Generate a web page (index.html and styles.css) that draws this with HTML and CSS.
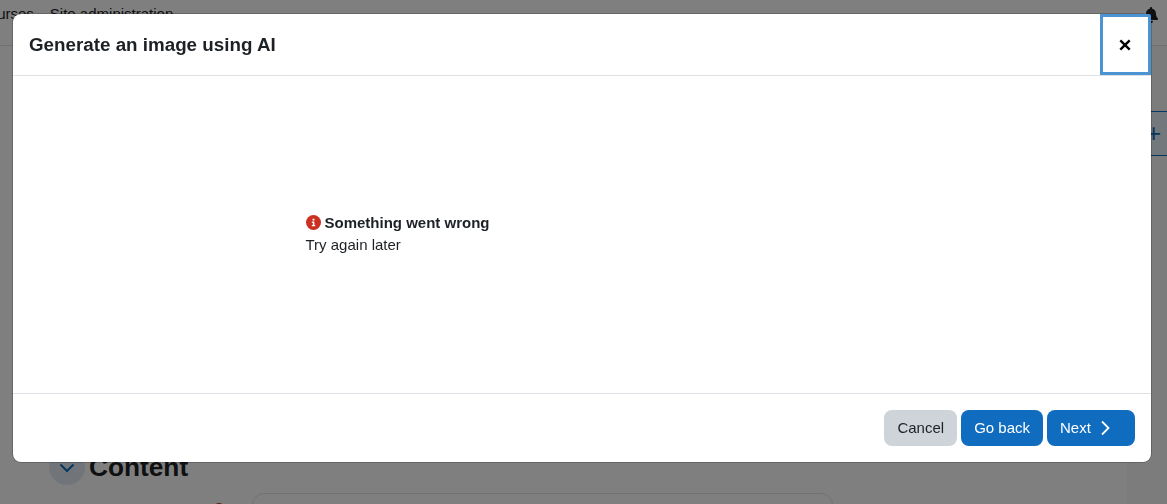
FILE: index.html
```html
<!DOCTYPE html>
<html lang="en">
<head>
<meta charset="utf-8">
<title>Generate an image using AI</title>
<link rel="stylesheet" href="styles.css">
</head>
<body>
<div class="page">
  <nav class="topnav">
    <span class="nav-links"><span>Courses</span><span>Site administration</span></span>
    <svg class="bell" viewBox="0 0 448 512" width="14" height="16"><path d="M224 0c-18 0-32 14-32 32v19C119 66 64 131 64 208v19c0 47-17 92-49 127l-7 8c-8 9-10 22-5 34s16 18 29 18h384c13 0 24-7 29-18s3-25-5-34l-7-8c-32-35-49-80-49-127v-19c0-77-55-142-128-157V32c0-18-14-32-32-32zm45 493c12-12 19-28 19-45H160c0 17 7 33 19 45s28 19 45 19 33-7 45-19z"/></svg>
  </nav>
  <div class="page-body">
    <main class="content">
      <div class="section-head">
        <span class="chevron-circle">
          <svg viewBox="0 0 16 16" width="16" height="16"><path d="M1.500 5.500L8 12l6.500-6.500" fill="none" stroke="#0f6cbf" stroke-width="2"/></svg>
        </span>
        <h2 class="section-title">Content</h2>
      </div>
      <div class="field-row">
        <span class="required-dot"></span>
        <div class="field-box"></div>
      </div>
    </main>
    <aside class="drawer">
      <span class="drawer-toggle">+</span>
    </aside>
  </div>
</div>
<div class="backdrop">
  <section class="modal">
    <header class="modal-header">
      <h1 class="modal-title">Generate an image using AI</h1>
      <button class="close" type="button" aria-label="Close">
        <svg viewBox="0 0 12 12" width="12" height="12"><path d="M1.300 1.300l9.400 9.400M10.700 1.300l-9.400 9.400" fill="none" stroke="#000" stroke-width="2.400"/></svg>
      </button>
    </header>
    <div class="modal-body">
      <div class="message">
        <div class="message-title">
          <svg class="err-icon" viewBox="0 0 16 16" width="15" height="15"><circle cx="8" cy="8" r="8" fill="#ca3120"/><path d="M7 4h2v1.800H7zM6.200 7h2.700v3.700h.9V12H6.200v-1.300h1.100V8.300H6.200z" fill="#fff"/></svg>
          <strong>Something went wrong</strong>
        </div>
        <div class="message-text">Try again later</div>
      </div>
    </div>
    <footer class="modal-footer">
      <button class="btn btn-secondary" type="button">Cancel</button>
      <button class="btn btn-primary" type="button">Go back</button>
      <button class="btn btn-primary btn-next" type="button">Next
        <svg viewBox="0 0 10 16" width="10" height="16"><path d="M2 1.500L8.500 8 2 14.500" fill="none" stroke="#fff" stroke-width="1.800"/></svg>
      </button>
    </footer>
  </section>
</div>
</body>
</html>
```
FILE: styles.css
```css
* { box-sizing: border-box; }
html, body { margin: 0; height: 100%; overflow: hidden; }
body {
  font-family: "Liberation Sans", Arial, sans-serif;
  font-size: 15px;
  color: #1d2125;
  background: #fff;
}
.page { height: 504px; display: flex; flex-direction: column; overflow: hidden; }
.topnav {
  height: 46px;
  flex: none;
  display: flex;
  justify-content: space-between;
  align-items: flex-start;
  border-bottom: 1px solid #dee2e6;
  padding: 5px 9px 0 0;
}
.nav-links { display: flex; gap: 16px; margin-left: -22px; line-height: 18px; }
.bell { margin-top: 2px; fill: #1d2125; }
.page-body { flex: 1; display: flex; min-height: 0; }
.content { flex: 1; padding: 403px 0 0 49px; }
.section-head { display: flex; align-items: center; gap: 4px; height: 36px; }
.chevron-circle {
  width: 36px; height: 36px; border-radius: 50%;
  background: #e3ebf3;
  display: flex; align-items: center; justify-content: center;
}
.section-title { margin: 0; font-size: 26.25px; font-weight: 700; line-height: 34px; color: #1d2125; }
.field-row { display: flex; margin-top: 8px; padding-left: 164px; align-items: flex-start; gap: 27px; }
.required-dot { width: 12px; height: 12px; margin-top: 10px; border-radius: 50%; background: #ca3120; flex: none; }
.field-box { width: 581px; height: 40px; border: 1px solid #dee2e6; border-radius: 12px; }
.drawer { width: 40px; flex: none; background: #f8f9fa; padding-top: 65px; }
.drawer-toggle {
  display: flex; align-items: center;
  height: 45px; padding-left: 19px;
  border-top: 1px solid #0f6cbf; border-bottom: 1px solid #0f6cbf;
  background: #e7f0f8; color: #0f6cbf; font-size: 26px;
}
.backdrop { position: fixed; inset: 0; background: rgba(0, 0, 0, .5); }
.modal {
  position: absolute; left: 13px; top: 14px;
  width: 1138px; height: 448px;
  background: #fff;
  border-radius: 8px;
  display: flex; flex-direction: column;
  box-shadow: 0 0 0 1px rgba(0,0,0,.2);
}
.modal-header {
  height: 62px; flex: none;
  display: flex; align-items: stretch; justify-content: space-between;
  padding-left: 16px;
  border-bottom: 1px solid #dee2e6;
}
.modal-title { margin: 2px 0 0; align-self: center; font-size: 18.8px; font-weight: 700; line-height: 1.2; color: #1d2125; }
.close {
  width: 51px; padding: 0;
  background: #fff;
  border: 3px solid #4b93d3;
  border-top-right-radius: 2px;
  display: flex; align-items: center; justify-content: center;
}
.close svg { margin-right: 1px; }
.modal-body { flex: 1; display: flex; padding: 136px 0 0 292.5px; }
.message-title { display: flex; align-items: center; gap: 4px; line-height: 22px; height: 22px; }
.err-icon { margin-bottom: 1px; }
.message-text { line-height: 22px; }
.modal-footer {
  height: 69px; flex: none;
  display: flex; justify-content: flex-end; align-items: flex-start; gap: 4px;
  padding: 16px 16px 0 0;
  border-top: 1px solid #dee2e6;
}
.btn {
  height: 36px; padding: 0 13px 2px;
  font: inherit; line-height: 1;
  border: 0; border-radius: 8px;
}
.btn-secondary { background: #ced4da; color: #1d2125; }
.btn-primary { background: #0f6cbf; color: #fff; }
.btn-next { width: 88px; display: flex; align-items: center; gap: 9px; }
.btn-next svg { margin-top: 2px; }
```
